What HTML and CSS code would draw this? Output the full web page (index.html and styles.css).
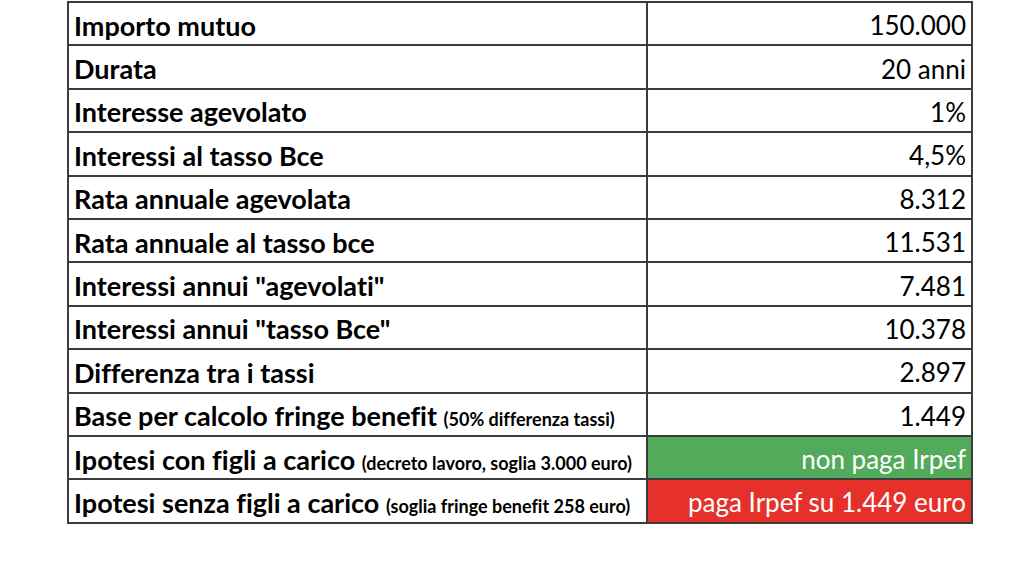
FILE: index.html
```html
<!DOCTYPE html>
<html lang="it">
<head>
<meta charset="utf-8">
<link rel="stylesheet" href="styles.css">
</head>
<body>
<table class="sheet">
  <tr><td class="lbl">Importo mutuo</td><td class="val">150.000</td></tr>
  <tr><td class="lbl">Durata</td><td class="val">20 anni</td></tr>
  <tr><td class="lbl">Interesse agevolato</td><td class="val">1%</td></tr>
  <tr><td class="lbl">Interessi al tasso Bce</td><td class="val">4,5%</td></tr>
  <tr><td class="lbl">Rata annuale agevolata</td><td class="val">8.312</td></tr>
  <tr><td class="lbl">Rata annuale al tasso bce</td><td class="val">11.531</td></tr>
  <tr><td class="lbl">Interessi annui "agevolati"</td><td class="val">7.481</td></tr>
  <tr><td class="lbl">Interessi annui "tasso Bce"</td><td class="val">10.378</td></tr>
  <tr><td class="lbl">Differenza tra i tassi</td><td class="val">2.897</td></tr>
  <tr><td class="lbl">Base per calcolo fringe benefit <span class="note">(50% differenza tassi)</span></td><td class="val">1.449</td></tr>
  <tr><td class="lbl">Ipotesi con figli a carico <span class="note">(decreto lavoro, soglia 3.000 euro)</span></td><td class="val green">non paga Irpef</td></tr>
  <tr><td class="lbl">Ipotesi senza figli a carico <span class="note">(soglia fringe benefit 258 euro)</span></td><td class="val red">paga Irpef su 1.449 euro</td></tr>
</table>
</body>
</html>
```

FILE: styles.css
```css
html, body {
  margin: 0;
  padding: 0;
  background: #ffffff;
}
body {
  font-family: "Lato", "Open Sans", sans-serif;
  color: #000;
  font-variant-ligatures: none;
}
.sheet {
  margin: 1px 0 0 67px;
  border-collapse: collapse;
  width: 906px;
  table-layout: fixed;
}
.sheet td {
  border: 2px solid #3c3c3c;
  height: 43.4px;
  padding: 3px 0 0 0;
  box-sizing: border-box;
  line-height: 1;
  vertical-align: middle;
  white-space: nowrap;
  overflow: hidden;
}
.sheet td.lbl {
  width: 579px;
  font-size: 27px;
  font-weight: 700;
  padding-left: 5px;
}
.sheet td.val {
  text-align: right;
  padding-right: 5px;
  font-size: 26px;
  font-weight: 400;
}
.note {
  font-size: 18px;
  font-weight: 700;
}
.green {
  background: #52aa5b;
  color: #fff;
}
.red {
  background: #e5312a;
  color: #fff;
}
```
